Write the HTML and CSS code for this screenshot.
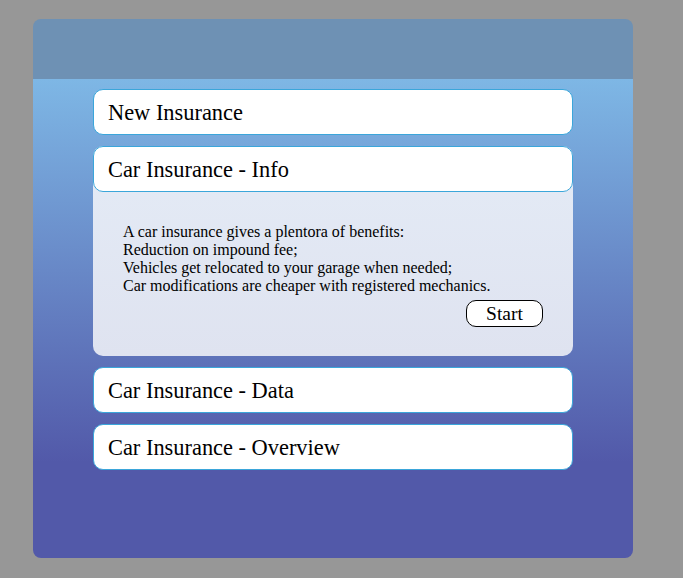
FILE: index.html
```html
<!DOCTYPE html>
<html>
<head>
<meta charset="utf-8">
<link rel="stylesheet" href="styles.css">
</head>
<body>
<div class="card">
  <div class="card-head"></div>
  <div class="card-body">
    <div class="accordion">
      <div class="item"><div class="item-head">New Insurance</div></div>
      <div class="item open">
        <div class="item-head">Car Insurance - Info</div>
        <div class="item-content">
          <p class="info">A car insurance gives a plentora of benefits:<br>Reduction on impound fee;<br>Vehicles get relocated to your garage when needed;<br>Car modifications are cheaper with registered mechanics.</p>
          <div class="actions"><button class="start">Start</button></div>
        </div>
      </div>
      <div class="item"><div class="item-head">Car Insurance - Data</div></div>
      <div class="item"><div class="item-head">Car Insurance - Overview</div></div>
    </div>
  </div>
</div>
</body>
</html>
```
FILE: styles.css
```css
html, body {
  margin: 0;
  padding: 0;
  background: #979797;
  font-family: "Liberation Serif", "Times New Roman", serif;
  color: #000;
}
body {
  padding: 19px 0 0 33px;
  height: 578px;
  box-sizing: border-box;
}
.card {
  width: 600px;
  height: 539px;
  border-radius: 8px;
  overflow: hidden;
  display: flex;
  flex-direction: column;
}
.card-head {
  height: 60px;
  background: #6e91b4;
  flex: none;
}
.card-body {
  flex: 1;
  background: linear-gradient(to bottom, #7eb7e5 0%, #5259a9 80%, #5259a9 100%);
  padding: 10px 0 0 60px;
}
.accordion {
  width: 480px;
  display: flex;
  flex-direction: column;
  gap: 11px;
}
.item-head {
  box-sizing: border-box;
  height: 46px;
  background: #fff;
  border: 1px solid #3ba6da;
  border-radius: 10px;
  padding: 2px 14px 0;
  display: flex;
  align-items: center;
  font-size: 22.4px;
}
.item.open {
  background: linear-gradient(to bottom, #e4ebf6, #dfe3f0);
  border-radius: 10px;
}
.item-content {
  height: 164px;
  box-sizing: border-box;
  padding: 31px 30px 0 30px;
}
.info {
  margin: 0;
  font-size: 16px;
  line-height: 18px;
}
.actions {
  display: flex;
  justify-content: flex-end;
  margin-top: 5px;
}
.start {
  font-family: "Liberation Serif", "Times New Roman", serif;
  font-size: 19.5px;
  width: 77px;
  height: 27px;
  background: #fff;
  border: 1px solid #000;
  border-radius: 10px;
  padding: 0;
  color: #000;
}
```
